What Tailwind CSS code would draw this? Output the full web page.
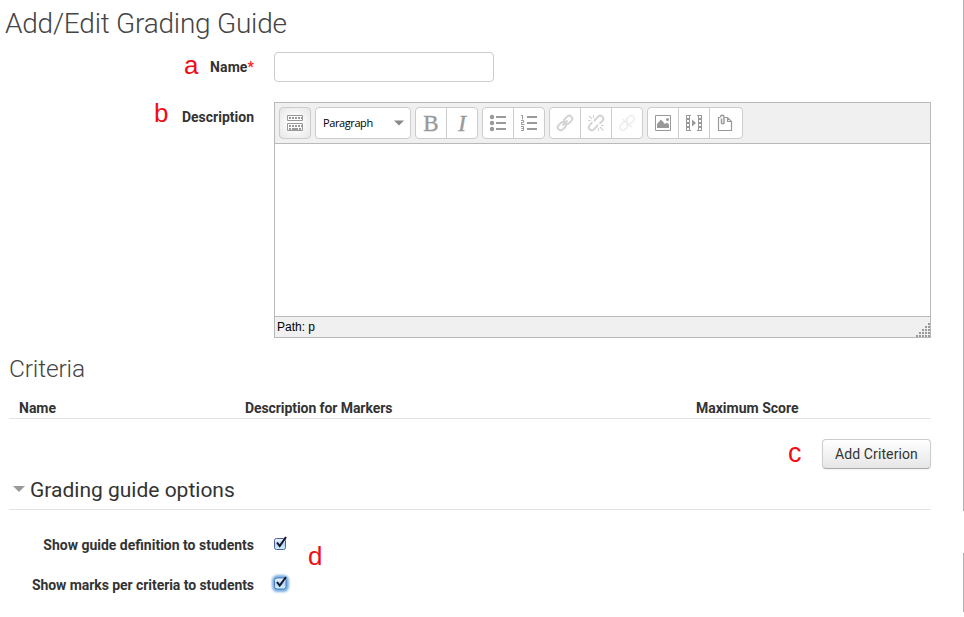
<!DOCTYPE html>
<html lang="en">
<head>
<meta charset="utf-8">
<title>Add/Edit Grading Guide</title>
<script src="https://cdn.jsdelivr.net/npm/@tailwindcss/browser@4"></script>
</head>
<body class="bg-white overflow-hidden">
<div class="flex w-[964px] h-[617px] justify-between font-[Roboto,sans-serif] text-sm leading-5 text-[#333]">
  <main class="flex flex-col w-[931px]">
    <h1 class="h-[52px] pl-[5px] text-[28px] leading-[47px] font-light tracking-[-0.22px] text-[#444] whitespace-nowrap">Add/Edit Grading Guide</h1>

    <div class="flex h-[50px] items-start">
      <div class="flex w-[254px] h-[30px] justify-end items-center">
        <span class="w-[26px] font-[Liberation_Sans,sans-serif] text-[26px] leading-[30px] text-[#ee0d15] -mt-[4px]">a</span>
        <label for="name" class="font-bold tracking-[0.1px]">Name<span class="text-[#f22]">*</span></label>
      </div>
      <input id="name" type="text" class="ml-5 w-[220px] h-[30px] rounded border border-[#ccc] bg-white">
    </div>

    <div class="flex h-[236px] items-start">
      <div class="flex w-[254px] h-[30px] justify-end items-center">
        <span class="w-[28px] font-[Liberation_Sans,sans-serif] text-[26px] leading-[30px] text-[#ee0d15] -mt-[9px]">b</span>
        <span class="font-bold">Description</span>
      </div>
      <div class="ml-5 flex flex-col w-[657px] h-[236px] border border-[#b9b9b9]">
        <div class="flex h-[41px] gap-1 px-1 pt-1 bg-[#f0f0f0] border-b border-[#b9b9b9] text-[#999]">
          <button class="w-8 h-8 rounded border border-[#ccc] bg-[radial-gradient(circle,#fff_20%,#e9e9e9_90%)]">
            <svg class="block w-[30px] h-[30px]" viewBox="0 0 30 30" fill="none" stroke="currentColor"><path d="M7.500 7.500h15v5h-15zM7.500 15.500h15v7h-15z"/><path stroke-width="2" stroke-dasharray="2 1" d="M9 10h13M9 18h13"/><path stroke-width="2" d="M9 21h2M12 21h6M19 21h2"/></svg>
          </button>
          <button class="flex items-center justify-between w-24 h-8 pl-[7px] pr-[6px] rounded border border-[#ccc] bg-white text-[11px] text-black">
            <span class="font-[Open_Sans,sans-serif] tracking-[-0.4px]">Paragraph</span>
            <svg class="w-[10px] h-[6px]" viewBox="0 0 10 6" fill="#888"><path d="M0 .5h10L5 5.500z"/></svg>
          </button>
          <div class="flex h-8 w-[63px] rounded border border-[#ccc] bg-white font-[Liberation_Serif,serif] text-[23px] leading-[31px] text-center [-webkit-text-stroke:0.4px_#999]">
            <button class="w-[31px] border-r border-[#ccc]">B</button><button class="w-[30px] italic">I</button>
          </div>
          <div class="flex h-8 w-[63px] rounded border border-[#ccc] bg-white">
            <button class="w-[31px] border-r border-[#ccc]"><svg class="block w-[30px] h-[30px]" viewBox="0 0 30 30" fill="currentColor"><circle cx="9" cy="9" r="2.200"/><circle cx="9" cy="15" r="2.200"/><circle cx="9" cy="21" r="2.200"/><path d="M13 8h10v2H13zM13 14h10v2H13zM13 20h10v2H13z"/></svg></button>
            <button class="w-[30px]"><svg class="block w-[30px] h-[30px]" viewBox="0 0 30 30" fill="none" stroke="currentColor"><path stroke-width="2" d="M13 9h10M13 15h10M13 21h10"/><path d="M7 7.500h1.500v4M7 12.500h2.500v2h-2v2h3M7 18.500h2.500v4H7M7.500 20.500h2"/></svg></button>
          </div>
          <div class="flex h-8 w-[94px] rounded border border-[#ccc] bg-white text-[#d4d4d4]">
            <button class="w-[31px] border-r border-[#ccc]"><svg class="block w-[30px] h-[30px]" viewBox="0 0 30 30" fill="none" stroke="currentColor" stroke-width="2"><g transform="rotate(-45 15 15)"><rect x="6" y="12" width="9" height="6" rx="3"/><rect x="15" y="12" width="9" height="6" rx="3"/><path d="M11.500 15h7"/></g></svg></button>
            <button class="w-[31px] border-r border-[#ccc]"><svg class="block w-[30px] h-[30px]" viewBox="0 0 30 30" fill="none" stroke="currentColor" stroke-width="2"><g transform="rotate(-45 15 15)"><path d="M13 12H9a3 3 0 0 0 0 6h4a3 3 0 0 0 2-1M17 18h4a3 3 0 0 0 0-6h-4a3 3 0 0 0-2 1"/></g><path stroke-width="1.200" d="M8 8l3 3M12.500 7v3M7 12.500h3M19 19l3.500 3.500M17.500 20v3M20 17.500h3"/></svg></button>
            <button class="w-[30px] text-[#f0f0f0]"><svg class="block w-[30px] h-[30px]" viewBox="0 0 30 30" fill="none" stroke="currentColor" stroke-width="1.800"><g transform="rotate(-45 15 15)"><rect x="6" y="12" width="9" height="6" rx="3"/><rect x="15" y="12" width="9" height="6" rx="3"/></g><path d="M10 11l10 8M15 9v12"/></svg></button>
          </div>
          <div class="flex h-8 w-[96px] rounded border border-[#ccc] bg-white">
            <button class="w-[31px] border-r border-[#ccc]"><svg class="block w-[30px] h-[30px]" viewBox="0 0 30 30"><path fill="none" stroke="currentColor" d="M7.500 7.500h15v15h-15z"/><path fill="currentColor" d="M9 20v-4l4-4.500 4 4.500 2-1.500 2 2V20z"/><circle cx="19.500" cy="11.500" r="1.500" fill="currentColor"/></svg></button>
            <button class="w-[31px] border-r border-[#ccc]"><svg class="block w-[30px] h-[30px]" viewBox="0 0 30 30" fill="currentColor"><path fill-rule="evenodd" d="M7 7h16v16H7zM11 8v14h8V8zM8 8v2h2V8zM8 12v2h2v-2zM8 16v2h2v-2zM8 20v2h2v-2zM20 8v2h2V8zM20 12v2h2v-2zM20 16v2h2v-2zM20 20v2h2v-2z"/><path fill="#fff" d="M12 7h6v1h-6zM12 22h6v1h-6z"/><path d="M13 11.500v7l4-3.500z"/></svg></button>
            <button class="w-[32px]"><svg class="block w-[30px] h-[30px]" viewBox="0 0 30 30" fill="none" stroke="currentColor" stroke-width="1.200"><path d="M10.500 9.500h-2v13h13v-9l-4-4h-2.500M17.500 9.500v4h4"/><path stroke-width="1.500" d="M11.500 10.500v4.500q1.500 1.500 2.500 0V9a1.700 1.700 0 0 0-3.500 0"/></svg></button>
          </div>
        </div>
        <div class="flex-1 bg-white"></div>
        <div class="flex justify-between h-[21px] pl-[2px] bg-[#f0f0f0] border-t border-[#b9b9b9] font-[Liberation_Sans,sans-serif] text-[12px] leading-[20px] text-black">
          <span>Path: p</span>
          <svg class="w-[14px] h-[14px] mt-[6px]" viewBox="0 0 14 14" fill="#999"><path d="M12 0h2v2h-2zM9 3h2v2H9zM12 3h2v2h-2zM6 6h2v2H6zM9 6h2v2H9zM12 6h2v2h-2zM3 9h2v2H3zM6 9h2v2H6zM9 9h2v2H9zM12 9h2v2h-2zM0 12h2v2H0zM3 12h2v2H3zM6 12h2v2H6zM9 12h2v2H9zM12 12h2v2h-2z"/></svg>
        </div>
      </div>
    </div>

    <h2 class="h-[60px] pl-[9px] pt-[11px] text-[24.500px] leading-[40px] font-light tracking-[-0.15px] text-[#444]">Criteria</h2>
    <div class="grid grid-cols-[226px_451px_1fr] ml-[9px] pl-[10px] h-[21px] border-b border-[#e3e3e3] font-bold">
      <span>Name</span><span class="tracking-[-0.08px]">Description for Markers</span><span>Maximum Score</span>
    </div>
    <div class="flex justify-end pt-5 h-[51px]">
      <span class="w-[34px] mt-px font-[Liberation_Sans,sans-serif] text-[27px] leading-[27px] text-[#ee0d15]">c</span>
      <button class="w-[109px] h-[30px] rounded border border-[#ccc] border-b-[#aaa] bg-linear-to-b from-white to-[#e6e6e6] shadow-[0_1px_2px_rgba(0,0,0,0.05)] tracking-[0.1px] whitespace-nowrap">Add Criterion</button>
    </div>
    <div class="flex ml-[9px] pl-1 h-[40px] border-b border-[#e3e3e3] text-[21px] leading-[40px]">
      <svg class="w-3 h-[6px] mt-[16px] mr-[5px]" viewBox="0 0 12 6" fill="#999"><path d="M0 0h12L6 6z"/></svg>
      <span>Grading guide options</span>
    </div>

    <div class="flex pt-[25px]">
      <div class="flex flex-col w-[254px] gap-5 items-end font-bold">
        <span>Show guide definition to students</span>
        <span class="tracking-[-0.06px]">Show marks per criteria to students</span>
      </div>
      <div class="flex flex-col gap-[24px] ml-5 w-[34px]">
        <svg class="w-4 h-4 overflow-visible" viewBox="0 0 16 16"><defs><linearGradient id="aqua" x2="0" y2="1"><stop stop-color="#f4f9ff"/><stop offset=".5" stop-color="#b7d6f7"/><stop offset="1" stop-color="#d3f2ff"/></linearGradient></defs><rect x=".5" y="3.500" width="11" height="11" rx="2" fill="url(#aqua)" stroke="#4c5e9c"/><path d="M3 7.500l2.700 3.500L12 2" fill="none" stroke="#10152b" stroke-width="2"/></svg>
        <svg class="w-4 h-4 overflow-visible" viewBox="0 0 16 16"><rect x=".5" y="2.500" width="12" height="12" rx="3" fill="none" stroke="#4d92d6" stroke-width="5" opacity=".75" class="blur-[1px]"/><rect x=".5" y="3" width="11.500" height="11" rx="2.500" fill="url(#aqua)" stroke="#4779b8"/><path d="M3 7l2.700 3.500L12 2" fill="none" stroke="#10152b" stroke-width="2"/></svg>
      </div>
      <span class="mt-[6px] font-[Liberation_Sans,sans-serif] text-[26px] leading-[30px] text-[#ee0d15]">d</span>
    </div>
  </main>
  <div class="flex flex-col w-px gap-[42px]">
    <div class="h-[511px] bg-[#b0b0b0]"></div>
    <div class="h-[59px] bg-[#b0b0b0]"></div>
  </div>
</div>
</body>
</html>
